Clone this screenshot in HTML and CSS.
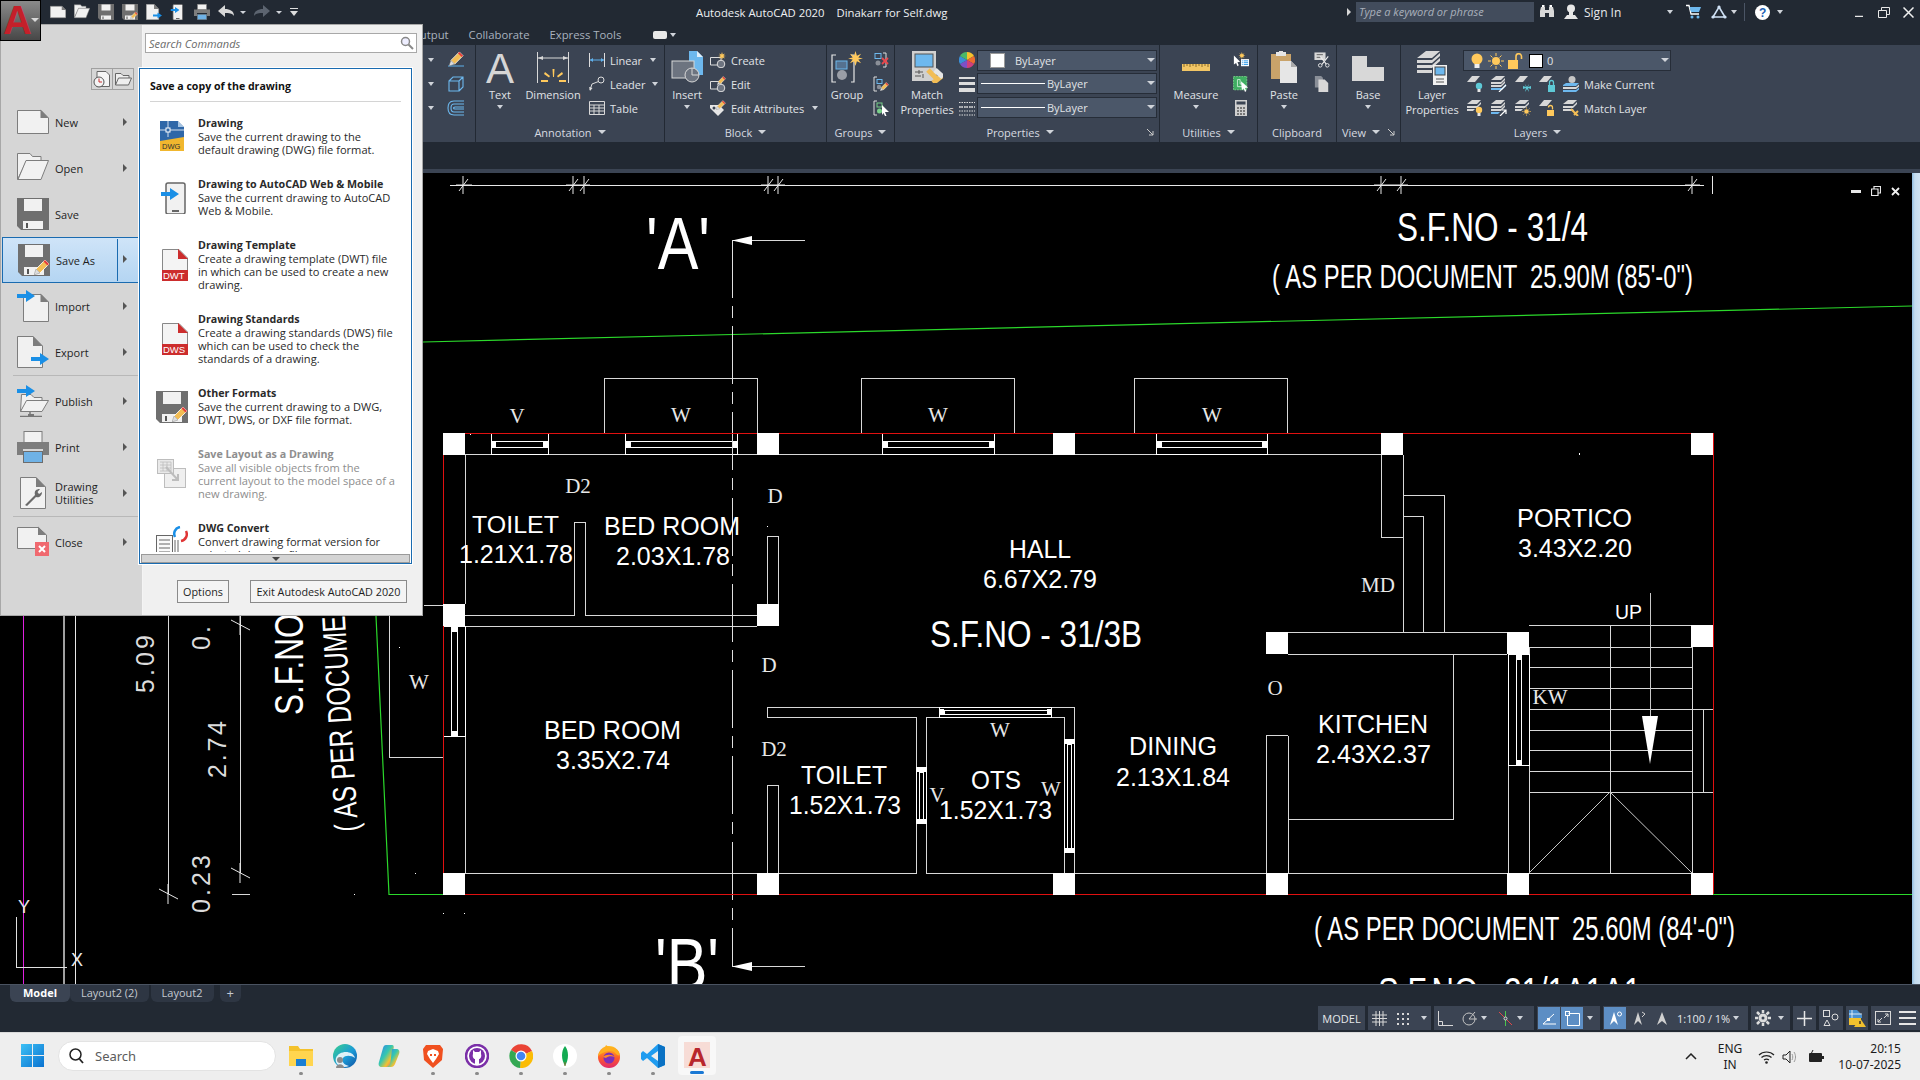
FILE: index.html
```html
<!DOCTYPE html>
<html lang="en">
<head>
<meta charset="utf-8">
<title>Autodesk AutoCAD 2020</title>
<link rel="stylesheet" href="styles.css">
</head>
<body>
<svg class="defs" width="0" height="0" aria-hidden="true">
  <defs>
    <linearGradient id="gBtn" x1="0" y1="0" x2="0" y2="1"><stop offset="0" stop-color="#8a8a8a"/><stop offset="1" stop-color="#474747"/></linearGradient>
    <linearGradient id="gWin" x1="0" y1="0" x2="1" y2="1"><stop offset="0" stop-color="#3cc0f5"/><stop offset="1" stop-color="#0a72d0"/></linearGradient>
    <linearGradient id="gEdge" x1="0" y1="0" x2="1" y2="1"><stop offset="0" stop-color="#3ad08e"/><stop offset=".55" stop-color="#1b9ad6"/><stop offset="1" stop-color="#0f4fa0"/></linearGradient>
    <linearGradient id="gCop" x1="0" y1="0" x2="1" y2="1"><stop offset="0" stop-color="#2e7ff0"/><stop offset=".45" stop-color="#35c8b0"/><stop offset=".7" stop-color="#f2c230"/><stop offset="1" stop-color="#e0489a"/></linearGradient>
    <linearGradient id="gFox" x1="0" y1="0" x2="0" y2="1"><stop offset="0" stop-color="#ffc11f"/><stop offset=".55" stop-color="#ff5a2a"/><stop offset="1" stop-color="#e0286c"/></linearGradient>

    <symbol id="m-new" viewBox="0 0 32 32"><path d="M.5 4.500H24L31.500 12V27.500H.5Z" fill="#f1f1f1" stroke="#7d7d7d"/><path d="M23.500 3.500L31.500 12H23.500Z" fill="#7d7d7d"/></symbol>
    <symbol id="m-open" viewBox="0 0 32 32"><path d="M.5 1.500H13L15.500 4.500H24V9H9.500L.5 27.500Z" fill="#f1f1f1" stroke="#7d7d7d"/><path d="M9 8.500H31.500L24 27.500H1Z" fill="#f1f1f1" stroke="#7d7d7d"/></symbol>
    <symbol id="m-save" viewBox="0 0 32 32"><path d="M0 0H32V32H4L0 28Z" fill="#6f6f6f"/><rect x="7" y="1" width="18" height="12" fill="#f1f1f1"/><rect x="6" y="23" width="20" height="8" fill="#f1f1f1"/><rect x="9" y="25" width="2" height="5" fill="#555"/></symbol>
    <symbol id="pencil" viewBox="0 0 16 16"><path d="M11 1L15 5L6 14L2 10Z" fill="#f2bd55" stroke="#fff" stroke-width=".8"/><path d="M11 1L15 5L13.500 6.500L9.500 2.500Z" fill="#e23d3d"/><path d="M2 10L6 14L0 16Z" fill="#ddd" stroke="#777" stroke-width=".4"/></symbol>
    <symbol id="m-saveas" viewBox="0 0 32 32"><use href="#m-save" width="32" height="32"/><use href="#pencil" x="16" y="15" width="16" height="16"/></symbol>
    <symbol id="arrow-b" viewBox="0 0 18 12"><path d="M0 4H9V0L18 6L9 12V8H0Z" fill="#1a8fe6"/></symbol>
    <symbol id="m-import" viewBox="0 0 32 32"><path d="M6.500 4.500H24L31.500 12V31.500H6.500Z" fill="#f1f1f1" stroke="#7d7d7d"/><path d="M23.500 3.500L31.500 12H23.500Z" fill="#7d7d7d"/><use href="#arrow-b" x="0" y="0" width="18" height="12"/></symbol>
    <symbol id="m-export" viewBox="0 0 32 32"><path d="M.5 .5H16L25.500 10V31.500H.5Z" fill="#f1f1f1" stroke="#7d7d7d"/><path d="M16 0L25.500 10H16Z" fill="#7d7d7d"/><use href="#arrow-b" x="14" y="17" width="18" height="12"/></symbol>
    <symbol id="m-publish" viewBox="0 0 32 32"><path d="M4.500 9.500H14L17 12.500H25V16H11L3.500 26.500Z" fill="#f1f1f1" stroke="#7d7d7d"/><path d="M9.500 15.500H31.500L25 26.500H3.500Z" fill="#f1f1f1" stroke="#7d7d7d"/><path d="M13 27V31M3 31.500H25" stroke="#777" stroke-width="1.500" fill="none"/><rect x="11" y="29" width="6" height="3" fill="#777"/><use href="#arrow-b" x="0" y="0" width="18" height="12"/></symbol>
    <symbol id="m-print" viewBox="0 0 32 32"><rect x="7" y=".5" width="18" height="11" fill="#f1f1f1" stroke="#7d7d7d"/><path d="M0 11H32V24H26V18H6V24H0Z" fill="#7d7d7d"/><rect x="6.500" y="20.500" width="19" height="11" fill="#6fb2e6" stroke="#6d6d6d"/></symbol>
    <symbol id="m-util" viewBox="0 0 32 32"><path d="M3.500 .5H19L28.500 10V31.500H3.500Z" fill="#f1f1f1" stroke="#7d7d7d"/><path d="M19 0L28.500 10H19Z" fill="#7d7d7d"/><path d="M8 28L18 18C17 14 19 12 23 12L20.500 15L22 17L25 15C25 19 22 21 19 20L10 29Z" fill="#6a6a6a"/></symbol>
    <symbol id="m-close" viewBox="0 0 32 32"><path d="M.5 1.500H21L29.500 9V22H18V22.500H.5Z" fill="#f1f1f1" stroke="#7d7d7d"/><path d="M21 .5L29.500 9H21Z" fill="#7d7d7d"/><rect x="18" y="16" width="14" height="14" fill="#f0696f"/><path d="M22 20L28 26M28 20L22 26" stroke="#fff" stroke-width="2"/></symbol>
    <symbol id="p-dwg" viewBox="0 0 32 32"><path d="M0 0H24V30H0Z" fill="#2f67a8"/><path d="M18 0L24 6H18Z" fill="#a6c4e2"/><path d="M18 0H24V6Z" fill="#fff"/><path d="M0 17H24V30H0Z" fill="#2f67a8"/><path d="M0 20L24 16V30H0Z" fill="#f1b72e"/><path d="M0 9H24M8 0V16" stroke="#fff" stroke-width=".8"/><rect x="6" y="7" width="4" height="4" fill="#2f67a8" stroke="#fff"/><text class="ico-t" x="2" y="28" font-size="7.500" fill="#333">DWG</text></symbol>
    <symbol id="p-mobile" viewBox="0 0 32 32"><rect x="6" y="1" width="19" height="31" rx="2" fill="#f1f1f1" stroke="#666" stroke-width="1.500"/><rect x="12" y="28" width="7" height="2" fill="#666"/><use href="#arrow-b" x="1" y="6" width="18" height="12"/></symbol>
    <symbol id="p-dwt" viewBox="0 0 32 32"><path d="M2.500 .5H19L27.500 9V31.500H2.500Z" fill="#f4f4f4" stroke="#888"/><path d="M18 0L28 10H18Z" fill="#cc2d2d"/><rect x="2" y="21" width="26" height="11" fill="#cc2d2d"/><text class="ico-t" x="3" y="30" font-size="9.500" fill="#fff">DWT</text></symbol>
    <symbol id="p-dws" viewBox="0 0 32 32"><path d="M2.500 .5H19L27.500 9V31.500H2.500Z" fill="#f4f4f4" stroke="#888"/><path d="M18 0L28 10H18Z" fill="#cc2d2d"/><rect x="2" y="21" width="26" height="11" fill="#cc2d2d"/><text class="ico-t" x="3" y="30" font-size="9.500" fill="#fff">DWS</text></symbol>
    <symbol id="p-layout" viewBox="0 0 32 32"><rect x="8.500" y="10.500" width="21" height="19" fill="#efefef" stroke="#bdbdbd"/><rect x="1.500" y="1.500" width="16" height="14" fill="#e9e9e9" stroke="#bdbdbd"/><path d="M4 4H15V13H4M7 4V13M11 4V13M4 7H15M4 10H15" stroke="#bdbdbd" fill="none" stroke-width=".8"/><path d="M10 9L22 22M22 16V22H16" stroke="#bdbdbd" stroke-width="2" fill="none"/></symbol>
    <symbol id="p-conv" viewBox="0 0 32 32"><rect x=".5" y="9.500" width="16" height="22" fill="#fafafa" stroke="#666"/><path d="M3 14H14M3 18H14M3 22H14M3 26H14M19 14V32M22 14V32" stroke="#666" fill="none"/><path d="M24 1C19 2 17 7 19 11" stroke="#1a8fe6" stroke-width="2.500" fill="none"/><path d="M25 15C30 14 32 9 30 5" stroke="#e03535" stroke-width="2.500" fill="none"/></symbol>
    <symbol id="s-eraser" viewBox="0 0 18 18"><path d="M1 15H17" stroke="#5fb0ec"/><use href="#pencil" x="2" y="0" width="15" height="15"/></symbol>
    <symbol id="s-box" viewBox="0 0 18 18"><path d="M2 6H12V16H2ZM2 6L6 2H16V12L12 16M12 6L16 2" fill="none" stroke="#6db8ee" stroke-width="1.100"/></symbol>
    <symbol id="s-off" viewBox="0 0 18 18"><path d="M17 2H7C2 2 1 5.500 1 9S2 16 7 16H17M17 5H7C5 5 4 7 4 9S5 13 7 13H17M17 8H8C6 8 6 10 8 10H17" fill="none" stroke="#6db8ee" stroke-width="1.100"/></symbol>
    <symbol id="s-linear" viewBox="0 0 16 16"><path d="M.5 1V15M15.500 1V15" stroke="#ddd"/><path d="M1 8H15" stroke="#5fb0ec"/><path d="M1 8L4 6V10ZM15 8L12 6V10Z" fill="#5fb0ec"/></symbol>
    <symbol id="s-leader" viewBox="0 0 16 16"><circle cx="12" cy="4" r="3" fill="none" stroke="#ddd"/><path d="M9.500 5.500L3 8L1 14" fill="none" stroke="#ddd"/><path d="M1 15L0 11L3.500 12Z" fill="#ddd"/></symbol>
    <symbol id="s-table" viewBox="0 0 16 16"><path d="M.5 1.500H15.500V14.500H.5ZM.5 5H15.500M.5 8H15.500M.5 11H15.500M5 5V14.500M10 5V14.500" fill="none" stroke="#d9d9d9"/></symbol>
    <symbol id="s-star" viewBox="0 0 16 16"><path d="M8 0L9.500 5L14 3L11 7L16 8L11 9L14 13L9.500 11L8 16L6.500 11L2 13L5 9L0 8L5 7L2 3L6.500 5Z" fill="#ffc95c"/></symbol>
    <symbol id="s-create" viewBox="0 0 16 16"><path d="M.5 5.500H11V13H.5Z" fill="none" stroke="#ddd"/><circle cx="11" cy="12" r="3.800" fill="#6d7480" stroke="#ddd"/><use href="#s-star" x="8" y="0" width="8" height="8"/></symbol>
    <symbol id="s-edit" viewBox="0 0 16 16"><path d="M.5 5.500H11V13H.5Z" fill="none" stroke="#ddd"/><circle cx="11" cy="12" r="3.800" fill="#6d7480" stroke="#ddd"/><use href="#pencil" x="7" y="0" width="9" height="9"/></symbol>
    <symbol id="s-attr" viewBox="0 0 16 16"><path d="M0 5H9L14 10L8 16L0 8Z" fill="#e6e6e6"/><circle cx="4" cy="8" r="1.500" fill="#3b4453"/><use href="#pencil" x="6" y="0" width="10" height="10"/></symbol>
    <symbol id="s-ung" viewBox="0 0 16 16"><rect x="2" y="1.500" width="6" height="5" fill="none" stroke="#6db8ee"/><circle cx="5" cy="11" r="2.500" fill="#8a8f98"/><path d="M10 1H13V15H10" fill="none" stroke="#ddd"/><path d="M9 6L15 12M15 6L9 12" stroke="#e8484d" stroke-width="1.800"/></symbol>
    <symbol id="s-gedit" viewBox="0 0 16 16"><path d="M4 1H1V15H4" fill="none" stroke="#ddd"/><rect x="4" y="3.500" width="5" height="4" fill="none" stroke="#6db8ee"/><circle cx="6" cy="11" r="2.200" fill="#8a8f98"/><use href="#pencil" x="7" y="6" width="9" height="9"/></symbol>
    <symbol id="s-gsel" viewBox="0 0 16 16"><path d="M4 1H1V15H4" fill="none" stroke="#ddd"/><rect x="4" y="3" width="5" height="4" fill="none" stroke="#79d08a"/><circle cx="6.500" cy="11" r="2.500" fill="#79d08a"/><path d="M9 5L16 12H12L13.500 16L12 16L10.500 13L9 15Z" fill="#fff"/></symbol>
    <symbol id="s-color" viewBox="0 0 16 16"><path d="M8 8V0A8 8 0 0 1 15 4Z" fill="#f6c12c"/><path d="M8 8L15 4A8 8 0 0 1 15 12Z" fill="#ed6c2e"/><path d="M8 8L15 12A8 8 0 0 1 8 16Z" fill="#d03f7c"/><path d="M8 8V16A8 8 0 0 1 1 12Z" fill="#7d50c6"/><path d="M8 8L1 12A8 8 0 0 1 1 4Z" fill="#3a8fd8"/><path d="M8 8L1 4A8 8 0 0 1 8 0Z" fill="#4bb868"/></symbol>
    <symbol id="s-lw" viewBox="0 0 16 16"><rect y="1" width="16" height="2" fill="#ddd"/><rect y="6" width="16" height="3" fill="#ddd"/><rect y="12" width="16" height="4" fill="#ddd"/></symbol>
    <symbol id="s-lt" viewBox="0 0 16 16"><path d="M0 2.500H16M0 7H16M0 11H16M0 15H16" stroke="#ddd" stroke-dasharray="1.500 1" fill="none"/><path d="M0 7H16" stroke="#ddd" stroke-dasharray="4 1" fill="none"/></symbol>
    <symbol id="s-qp" viewBox="0 0 18 18"><path d="M1 4L8 11L5 11.500L6.500 15L5 16L3.500 12.500L1 14Z" fill="#fff"/><use href="#s-star" x="6" y="0" width="8" height="8"/><rect x="9" y="8" width="9" height="8" fill="#fff"/><path d="M10 10H11M12 10H17M10 12H11M12 12H17M10 14H11M12 14H17" stroke="#1a8fe6"/></symbol>
    <symbol id="s-qs" viewBox="0 0 18 18"><rect x=".5" y=".5" width="15" height="15" fill="#3fae62" stroke="#79d08a" stroke-dasharray="2 1"/><path d="M5 4H8V9H12V12H5Z" fill="none" stroke="#cdeed6"/><path d="M9 6L17 13L13.500 13.500L15 17L13.500 18L12 14L10 16Z" fill="#fff"/></symbol>
    <symbol id="s-calc" viewBox="0 0 16 16"><rect x="2" width="12" height="16" fill="#d0d0d0"/><rect x="3.500" y="1.500" width="9" height="3" fill="#3b4453"/><path d="M4 7H6V9H4ZM7 7H9V9H7ZM10 7H12V9H10ZM4 10H6V12H4ZM7 10H9V12H7ZM10 10H12V12H10ZM4 13H6V15H4ZM7 13H9V15H7ZM10 13H12V15H10Z" fill="#777"/></symbol>
    <symbol id="s-cut" viewBox="0 0 18 18"><path d="M.5 .5H13V9H.5Z" fill="#d8d8d8"/><path d="M3 3H10M3 6H8" stroke="#555"/><path d="M7 5L14 14M16 5L9 14" stroke="#eee" stroke-width="1.200"/><circle cx="7" cy="15" r="2" fill="#3b4453" stroke="#eee"/><circle cx="15" cy="15" r="2" fill="#3b4453" stroke="#eee"/></symbol>
    <symbol id="s-copy" viewBox="0 0 18 18"><path d="M1 0H8L10 2V13H1Z" fill="#8a8f98"/><path d="M5 4H12L16 8V18H5Z" fill="#d8d8d8"/></symbol>
    <symbol id="l-a" viewBox="0 0 16 16"><path d="M5 0H13L8 6H0Z" fill="#d8d8d8"/><circle cx="12" cy="10" r="3.200" fill="#5ec9d6"/><rect x="10.500" y="13" width="3" height="3" fill="#e6e6e6"/></symbol>
    <symbol id="l-b" viewBox="0 0 16 16"><path d="M5 0H14L10 4H0ZM0 6H10L14 2V4L10 8H0ZM0 9H10L14 5V7L10 11H0Z" fill="#d8d8d8"/><path d="M0 12H11L15 8V10L11 14H0Z" fill="#6db8ee"/><path d="M8 16L15 9" stroke="#fff" stroke-width="1.200"/></symbol>
    <symbol id="l-c" viewBox="0 0 16 16"><path d="M5 0H13L8 6H0Z" fill="#d8d8d8"/><path d="M10 8L11 11L8 10L8 13L11 12L10 16L12 13L14 16L13 12L16 13L16 10L13 11L14 8L12 11Z" fill="#5ec9d6"/></symbol>
    <symbol id="l-d" viewBox="0 0 16 16"><path d="M5 0H13L8 6H0Z" fill="#d8d8d8"/><rect x="9" y="9" width="7" height="7" fill="#5ec9d6"/><path d="M10.500 9V6.500A2 2 0 0 1 14.500 6.500V9" stroke="#5ec9d6" fill="none" stroke-width="1.300"/></symbol>
    <symbol id="l-cur" viewBox="0 0 16 16"><circle cx="9" cy="3.500" r="3.500" fill="#c6c6c6"/><path d="M0 9L3 7H16L13 10H0Z" fill="#6db8ee"/><path d="M0 11H13L16 8.500V10.500L13 13H0Z" fill="#d8d8d8"/><path d="M0 14H13L16 11.500V13.500L13 16H0Z" fill="#6db8ee"/></symbol>
    <symbol id="l-e" viewBox="0 0 16 16"><path d="M5 0H14L10 4H0ZM0 6H10L14 2V4L10 8H0ZM0 9H8L6 11H0Z" fill="#d8d8d8"/><circle cx="12" cy="10" r="3.200" fill="#ffc95c"/><rect x="10.500" y="13" width="3" height="3" fill="#e6e6e6"/></symbol>
    <symbol id="l-f" viewBox="0 0 16 16"><path d="M5 0H14L10 4H0ZM0 6H10L14 2V4L10 8H0ZM0 9H10L14 5V7L10 11H0Z" fill="#d8d8d8"/><path d="M0 12H9L7 14H0Z" fill="#6db8ee"/><path d="M9 16L15 10M11 10H15V14" stroke="#fff" stroke-width="1.200" fill="none"/></symbol>
    <symbol id="l-g" viewBox="0 0 16 16"><path d="M5 0H14L10 4H0ZM0 6H10L14 2V4L10 8H0ZM0 9H8L6 11H0Z" fill="#d8d8d8"/><use href="#s-sun" x="7" y="7" width="9" height="9"/></symbol>
    <symbol id="l-h" viewBox="0 0 16 16"><path d="M5 0H13L8 6H0Z" fill="#d8d8d8"/><rect x="8" y="10" width="7" height="6" fill="#ffc95c"/><path d="M13.500 9.500V7.500A2 2 0 0 0 9.500 7.500" stroke="#ffc95c" fill="none" stroke-width="1.300"/></symbol>
    <symbol id="l-i" viewBox="0 0 16 16"><path d="M5 0H14L10 4H0ZM0 6H10L14 2V4L10 8H0ZM0 9H10L11 11H0Z" fill="#d8d8d8"/><path d="M8 9L15 16M15 11L11 15" stroke="#f2bd55" stroke-width="2"/></symbol>
    <symbol id="s-sun" viewBox="0 0 16 16"><circle cx="8" cy="8" r="4" fill="#ffc95c"/><path d="M8 0V3M8 13V16M0 8H3M13 8H16M2.500 2.500L4.500 4.500M11.500 11.500L13.500 13.500M2.500 13.500L4.500 11.500M11.500 4.500L13.500 2.500" stroke="#ffc95c"/></symbol>
    <symbol id="s-bulb" viewBox="0 0 16 16"><circle cx="8" cy="6" r="5.500" fill="#ffc95c"/><path d="M5.500 11H10.500V15H5.500Z" fill="#eee"/></symbol>
    <symbol id="s-lock" viewBox="0 0 16 16"><rect x="1" y="7" width="10" height="9" fill="#ffc95c"/><path d="M9 7V3.500A2.600 2.600 0 0 1 14.500 3.500V6" stroke="#ffc95c" fill="none" stroke-width="1.600"/></symbol>
    <symbol id="b-lens" viewBox="0 0 16 16"><path d="M2 3H6V13H1V7ZM10 3H14L15 7V13H10Z" fill="#d8d8d8"/><rect x="6" y="6" width="4" height="3" fill="#d8d8d8"/><rect x="3" y="1" width="2.500" height="2" fill="#fff"/><rect x="10.500" y="1" width="2.500" height="2" fill="#fff"/></symbol>
    <symbol id="b-user" viewBox="0 0 16 16"><circle cx="8" cy="4.500" r="4" fill="#e6e6e6"/><rect x="6" y="8" width="4" height="3" fill="#e6e6e6"/><path d="M1 15L4 11H12L15 15Z" fill="#e6e6e6"/></symbol>
    <symbol id="b-cart" viewBox="0 0 16 16"><path d="M0 1.500H3L5 10H13" stroke="#fff" stroke-width="1.300" fill="none"/><path d="M3.500 3H15L13 8H5Z" fill="#6db8ee"/><circle cx="6" cy="13" r="1.500" fill="#6db8ee"/><circle cx="12" cy="13" r="1.500" fill="#6db8ee"/></symbol>
    <symbol id="b-tri" viewBox="0 0 16 16"><path d="M8 3L14 13H2Z" fill="none" stroke="#cfe1f5" stroke-width="1.600"/><circle cx="8" cy="3" r="1.600" fill="#cfe1f5"/><circle cx="2" cy="13" r="1.600" fill="#cfe1f5"/><circle cx="14" cy="13" r="1.600" fill="#cfe1f5"/></symbol>
  </defs>
</svg>

<div class="app">
  <header class="titlebar">
    <div class="qat">
      <svg class="i16"><use href="#m-new"/></svg>
      <svg class="i16"><use href="#m-open"/></svg>
      <svg class="i16"><use href="#m-save"/></svg>
      <svg class="i16"><use href="#m-saveas"/></svg>
      <svg class="i16"><use href="#m-export"/></svg>
      <svg class="i16"><use href="#p-mobile"/></svg>
      <svg class="i16"><use href="#m-print"/></svg>
      <svg class="i16 q-undo" viewBox="0 0 16 16"><path d="M0 7L7 1V5C12 5 16 7 16 12C14 9 11 9 7 9V13Z" fill="#d8d8d8"/></svg>
      <span class="car q-car"></span>
      <svg class="i16 q-redo" viewBox="0 0 16 16"><path d="M16 7L9 1V5C4 5 0 7 0 12C2 9 5 9 9 9V13Z" fill="#5c6470"/></svg>
      <span class="car q-car"></span>
      <svg class="q-menu" width="8" height="8" viewBox="0 0 8 8"><path d="M0 .5H8" stroke="#ddd"/><path d="M0 3H8L4 8Z" fill="#ddd"/></svg>
    </div>
    <div class="title"><span>Autodesk AutoCAD 2020</span><span class="title-file">Dinakarr for Self.dwg</span></div>
    <span class="tri-r"></span>
    <div class="search-key">Type a keyword or phrase</div>
    <svg class="i16 t-lens"><use href="#b-lens"/></svg>
    <svg class="i16 t-user"><use href="#b-user"/></svg>
    <span class="signin">Sign In</span>
    <span class="car t-car1"></span>
    <svg class="i16 t-cart"><use href="#b-cart"/></svg>
    <svg class="i16 t-tri"><use href="#b-tri"/></svg>
    <span class="car t-car2"></span>
    <span class="t-sep"></span>
    <svg class="t-help" width="15" height="15" viewBox="0 0 15 15"><circle cx="7.500" cy="7.500" r="7.500" fill="#fff"/><text class="ico-b" x="4" y="12" font-size="12" fill="#1a5fb4">?</text></svg>
    <span class="car t-car3"></span>
    <div class="winctl">
      <svg width="10" height="10" viewBox="0 0 10 10"><path d="M0 9.500H8" stroke="#e8e8e8" stroke-width="1.500"/></svg>
      <svg width="12" height="11" viewBox="0 0 12 11"><path d="M.5 3.500H8.500V10.500H.5ZM3.500 3V.5H11.500V7.500H9" fill="none" stroke="#e8e8e8"/></svg>
      <svg width="11" height="11" viewBox="0 0 11 11"><path d="M.5 .5L10.500 10.500M10.500 .5L.5 10.500" stroke="#f0f0f0" stroke-width="1.500"/></svg>
    </div>
  </header>

  <nav class="tabs">
    <span class="tab">Output</span>
    <span class="tab">Collaborate</span>
    <span class="tab">Express Tools</span>
    <span class="tab-toggle"></span>
    <span class="car tab-car"></span>
  </nav>

  <div class="ribbon">
    <section class="panel p0">
      <div class="tools t-right">
        <div class="scol">
          <div class="srow"><span class="car m-car"></span><svg class="i16 w18"><use href="#s-eraser"/></svg></div>
          <div class="srow"><span class="car m-car"></span><svg class="i16 w18"><use href="#s-box"/></svg></div>
          <div class="srow"><span class="car m-car"></span><svg class="i16 w18"><use href="#s-off"/></svg></div>
        </div>
      </div>
      <div class="plabel"></div>
    </section>

    <section class="panel p1">
      <div class="tools">
        <div class="big b-text">
          <div class="bicon"><span class="big-a">A</span></div>
          <span>Text</span><span class="car c-down"></span>
        </div>
        <div class="big b-dim">
          <div class="bicon"><svg width="32" height="32" viewBox="0 0 32 32"><path d="M.5 1V32M31.500 1V32" stroke="#d8d8d8"/><path d="M1 7H31" stroke="#d8d8d8"/><path d="M1 7L6 5V9ZM31 7L26 5V9Z" fill="#d8d8d8"/><path d="M15.500 18H17.500L17 26H16ZM7 23L8 21L13 25L12 26.500ZM26 23L25 21L20 25L21 26.500ZM4 29H11V31H4ZM22 29H29V31H22Z" fill="#ffc95c"/></svg></div>
          <span>Dimension</span>
        </div>
        <div class="scol s-anno">
          <div class="srow"><svg class="i16"><use href="#s-linear"/></svg><span>Linear</span><span class="car r-car1"></span></div>
          <div class="srow"><svg class="i16"><use href="#s-leader"/></svg><span>Leader</span><span class="car r-car2"></span></div>
          <div class="srow"><svg class="i16"><use href="#s-table"/></svg><span>Table</span></div>
        </div>
      </div>
      <div class="plabel"><span>Annotation</span><span class="car"></span></div>
    </section>

    <section class="panel p2">
      <div class="tools">
        <div class="big b-ins">
          <div class="bicon"><svg width="32" height="32" viewBox="0 0 32 32"><path d="M18 0H26L32 6V24H18Z" fill="#6db8ee"/><path d="M26 0L32 6H26Z" fill="#dfeefa"/><rect x="1" y="10" width="22" height="17" fill="#6d7480" stroke="#d8d8d8"/><circle cx="21" cy="24" r="7" fill="#6d7480" stroke="#d8d8d8"/><path d="M21 24V17M21 24H28" stroke="#d8d8d8"/></svg></div>
          <span>Insert</span><span class="car c-down"></span>
        </div>
        <div class="scol s-block">
          <div class="srow"><svg class="i16"><use href="#s-create"/></svg><span>Create</span></div>
          <div class="srow"><svg class="i16"><use href="#s-edit"/></svg><span>Edit</span></div>
          <div class="srow"><svg class="i16"><use href="#s-attr"/></svg><span>Edit Attributes</span><span class="car r-car3"></span></div>
        </div>
      </div>
      <div class="plabel"><span>Block</span><span class="car"></span></div>
    </section>

    <section class="panel p3">
      <div class="tools">
        <div class="big b-grp">
          <div class="bicon"><svg width="32" height="32" viewBox="0 0 32 32"><path d="M5 4H1V31H5M20 4H23V31H20" fill="none" stroke="#e6e6e6" stroke-width="1.200"/><rect x="5" y="10" width="11" height="8" fill="#55718f" stroke="#6db8ee"/><circle cx="11" cy="24" r="5" fill="#9a9ea6"/><use href="#s-star" x="17" y="0" width="15" height="15"/></svg></div>
          <span>Group</span>
        </div>
        <div class="scol s-grp">
          <div class="srow"><svg class="i16"><use href="#s-ung"/></svg></div>
          <div class="srow"><svg class="i16"><use href="#s-gedit"/></svg></div>
          <div class="srow"><svg class="i16"><use href="#s-gsel"/></svg></div>
        </div>
      </div>
      <div class="plabel"><span>Groups</span><span class="car"></span></div>
    </section>

    <section class="panel p4">
      <div class="tools">
        <div class="big b-match">
          <div class="bicon"><svg width="32" height="32" viewBox="0 0 32 32"><path d="M1 0H25V30H1Z" fill="#d0d0d0"/><rect x="4" y="3" width="18" height="13" fill="#6db8ee" stroke="#555"/><path d="M4 21H12M4 25H10M8 19V23M12 23V27" stroke="#555"/><path d="M17 19L28 30M32 24L22 32" stroke="#f2bd55" stroke-width="5"/><path d="M24 19L32 26" stroke="#e6e6e6" stroke-width="5"/></svg></div>
          <span>Match</span><span>Properties</span>
        </div>
        <div class="scol s-prop">
          <div class="srow"><svg class="i16"><use href="#s-color"/></svg></div>
          <div class="srow"><svg class="i16"><use href="#s-lw"/></svg></div>
          <div class="srow"><svg class="i16"><use href="#s-lt"/></svg></div>
        </div>
        <div class="scol s-drop">
          <div class="drop d-color"><span class="swatch"></span><span>ByLayer</span></div>
          <div class="drop"><span class="ln"></span><span>ByLayer</span></div>
          <div class="drop"><span class="ln"></span><span>ByLayer</span></div>
        </div>
      </div>
      <div class="plabel has-launch"><span>Properties</span><span class="car"></span><svg class="launch" width="7" height="7" viewBox="0 0 7 7"><path d="M0 0L6 6M6 2V6H2" stroke="#ccc" fill="none"/></svg></div>
    </section>

    <section class="panel p5">
      <div class="tools">
        <div class="big b-meas">
          <div class="bicon ruler-box"><svg width="28" height="7" viewBox="0 0 28 7"><rect width="28" height="7" fill="#f2c665"/><path d="M2 0V3M5 0V2M8 0V3M11 0V2M14 0V3M17 0V2M20 0V3M23 0V2M26 0V3" stroke="#8a6a28"/></svg></div>
          <span>Measure</span><span class="car c-down"></span>
        </div>
        <div class="scol s-util">
          <div class="srow"><svg class="i16"><use href="#s-qp"/></svg></div>
          <div class="srow"><svg class="i16"><use href="#s-qs"/></svg></div>
          <div class="srow"><svg class="i16"><use href="#s-calc"/></svg></div>
        </div>
      </div>
      <div class="plabel"><span>Utilities</span><span class="car"></span></div>
    </section>

    <section class="panel p6">
      <div class="tools">
        <div class="big b-paste">
          <div class="bicon"><svg width="26" height="32" viewBox="0 0 26 32"><path d="M0 3H20V28H0Z" fill="#c9a36a"/><rect x="5" y="1" width="10" height="4" fill="#e6e6e6"/><rect x="8" y="0" width="4" height="2" fill="#e6e6e6"/><path d="M9 10H20L26 16V32H9Z" fill="#e6e6e6"/><path d="M20 10L26 16H20Z" fill="#aaa"/></svg></div>
          <span>Paste</span><span class="car c-down"></span>
        </div>
        <div class="scol s-clip">
          <div class="srow"><svg class="i16"><use href="#s-cut"/></svg></div>
          <div class="srow"><svg class="i16"><use href="#s-copy"/></svg></div>
          <div class="srow"></div>
        </div>
      </div>
      <div class="plabel"><span>Clipboard</span></div>
    </section>

    <section class="panel p7">
      <div class="tools">
        <div class="big b-base">
          <div class="bicon"><svg width="32" height="25" viewBox="0 0 32 25"><path d="M0 0H15V11H32V25H0Z" fill="#d8d8d8"/></svg></div>
          <span>Base</span><span class="car c-down"></span>
        </div>
      </div>
      <div class="plabel has-launch lv"><span>View</span><span class="car"></span><svg class="launch" width="7" height="7" viewBox="0 0 7 7"><path d="M0 0L6 6M6 2V6H2" stroke="#ccc" fill="none"/></svg></div>
    </section>

    <section class="panel p8">
      <div class="tools">
        <div class="big b-layer">
          <div class="bicon"><svg width="30" height="34" viewBox="0 0 30 34"><path d="M9 0H23L15 7H0ZM0 9H15L23 2V5L15 12H0ZM0 14H15L23 7V10L15 17H0ZM0 19H15V22H0Z" fill="#d8d8d8"/><rect x="16" y="14" width="14" height="20" fill="#f2f2f2"/><rect x="18" y="16" width="10" height="8" fill="#6db8ee" stroke="#444"/><path d="M19 28H27M19 31H27" stroke="#555"/></svg></div>
          <span>Layer</span><span>Properties</span>
        </div>
        <div class="scol s-layer">
          <div class="drop d-layer"><svg class="i16"><use href="#s-bulb"/></svg><svg class="i16"><use href="#s-sun"/></svg><svg class="i16"><use href="#s-lock"/></svg><span class="swatch sw-b"></span><span>0</span></div>
          <div class="srow lrow"><svg class="i16"><use href="#l-a"/></svg><svg class="i16"><use href="#l-b"/></svg><svg class="i16"><use href="#l-c"/></svg><svg class="i16"><use href="#l-d"/></svg><svg class="i16"><use href="#l-cur"/></svg><span class="lt">Make Current</span></div>
          <div class="srow lrow"><svg class="i16"><use href="#l-e"/></svg><svg class="i16"><use href="#l-f"/></svg><svg class="i16"><use href="#l-g"/></svg><svg class="i16"><use href="#l-h"/></svg><svg class="i16"><use href="#l-i"/></svg><span class="lt">Match Layer</span></div>
        </div>
      </div>
      <div class="plabel la"><span>Layers</span><span class="car"></span></div>
    </section>
  </div>

  <div class="ribbon-gap"></div>
  <div class="ribbon-band"></div>

  <main class="canvas">
    <svg class="drawing" width="1912" height="811" viewBox="0 173 1912 811">
      <g fill="none" shape-rendering="crispEdges">
        <path d="M23.500 600V984" stroke="#e020e0"/>
        <path d="M64 600V984" stroke="#a0a0a0" stroke-width="2"/>
        <path d="M75.500 600V984" stroke="#e8e8e8"/>
        <path d="M16.500 917V967.500H67" stroke="#e0e0e0"/>
        <path d="M168.500 600V894M240.500 600V873M232 894.500H250" stroke="#d8d8d8"/>
      </g>
      <g fill="none" stroke="#e8e8e8">
        <path d="M159 889L178 899M168 884V904M231 620L250 630M240 615V635M231 868L250 878M240 863V883"/>
        <path d="M450 185.500H1704" shape-rendering="crispEdges"/>
        <path d="M456 185H472M463 176V194M459 191L468 179M566 185H590M573 176V194M584 176V194M569 191L578 179M580 191L589 179M761 185H785M768 176V194M778 176V194M764 191L773 179M774 191L783 179M1374 185H1408M1381 176V194M1401 176V194M1377 191L1386 179M1397 191L1406 179M1685 185H1700M1692 176V194M1688 191L1697 179M1712.500 176V194"/>
      </g>

      <g fill="none" stroke="#2bd92b" stroke-width="1.200">
        <path d="M423 342L1912 306"/>
        <path d="M376 616L389 894.500H443M1713 894.500H1912"/>
      </g>

      <g class="wall" fill="none" stroke="#d8d8d8" shape-rendering="crispEdges">
        <path d="M604.500 433V378.500H757.500V433M861.500 433V378.500H1014.500V433M1134.500 433V378.500H1287.500V433"/>
        <path d="M424 605.500H443M389.500 605V757.500H443"/>
        <path d="M443 454.500H1381M465.500 454V604M465.500 626V873"/>
        <path d="M465 615.500H574.500V522.500H585.500V615.500H757M465 626.500H757"/>
        <path d="M767.500 604V536.500H778.500V604"/>
        <path d="M1381.500 454V537.500H1403.500M1403.500 455V632M1403 495.500H1444.500V632M1403 516.500H1423.500V632"/>
        <path d="M1288 632.500H1507M1288 654.500H1507M1453.500 654V819.500H1288"/>
        <path d="M1288.500 735.500V873M1266.500 873V735.500H1288"/>
        <path d="M465 873.500H916.500V717.500H767.500V707.500H1074.500V873M926.500 873V717.500H1064.500V873M926 873.500H1266M1288 873.500H1507M1529 873.500H1691"/>
        <path d="M767.500 785.500H778.500V873M767.500 785V873"/>
        <path d="M1508.500 654V873M1529.500 647V873"/>
        <path d="M1529 625.500H1691M1529 647.500H1692M1529 667.500H1692M1529 688.500H1692M1529 709.500H1713M1529 730.500H1692M1529 750.500H1692M1529 771.500H1692M1529 792.500H1713"/>
        <path d="M1610.500 626V873M1692.500 647V873M1703.500 709V792"/>
      </g>
      <path d="M1610 792L1529 873M1610 792L1692 873" fill="none" stroke="#c8c8c8"/>
      <path d="M1650.500 593V716" stroke="#c8c8c8" fill="none"/>
      <path d="M1642 716H1658L1650 764Z" fill="#fff"/>

      <g class="win" fill="#000" stroke="#fff" shape-rendering="crispEdges">
        <path d="M491.500 433.500H548.500V454.500H491.500Z"/>
        <path d="M625.500 433.500H737.500V454.500H625.500Z"/>
        <path d="M882.500 433.500H994.500V454.500H882.500Z"/>
        <path d="M1156.500 433.500H1267.500V454.500H1156.500Z"/>
        <path d="M495 441.500H545V447.500H495ZM630 441.500H733V447.500H630ZM887 441.500H990V447.500H887ZM1161 441.500H1263V447.500H1161Z"/>
        <path d="M443.500 626.500H465.500V736.500H443.500Z"/>
        <path d="M451.500 631V733H457.500V631Z"/>
        <path d="M916.500 767.500H926.500V823.500H916.500Z"/>
        <path d="M919.500 772V819H923.500V772Z"/>
        <path d="M939.500 707.500H1051.500V717.500H939.500Z"/>
        <path d="M944 710.500H1047V714.500H944Z"/>
        <path d="M1064.500 739.500H1074.500V852.500H1064.500Z"/>
        <path d="M1067.500 744V848H1071.500V744Z"/>
        <path d="M1508.500 654.500H1529.500V765.500H1508.500Z"/>
        <path d="M1516.500 659V761H1521.500V659Z"/>
      </g>
      <g fill="#fff">
        <path d="M491 441H496V448H491ZM543 441H548V448H543ZM625 441H630V448H625ZM732 441H737V448H732ZM882 441H887V448H882ZM989 441H994V448H989ZM1156 441H1161V448H1156ZM1262 441H1267V448H1262Z"/>
        <path d="M451 626H458V631H451ZM451 731H458V736H451ZM917 767H926V772H917ZM917 819H926V823H917ZM940 709H944V715H940ZM1047 709H1051V715H1047ZM1065 740H1074V744H1065ZM1065 848H1074V852H1065ZM1516 654H1522V659H1516ZM1516 760H1522V765H1516Z"/>
      </g>

      <path d="M732.500 240V967" stroke="#e0e0e0" stroke-dasharray="58 8 12 8" fill="none" shape-rendering="crispEdges"/>
      <path d="M732 240.500H805M732 966.500H805" stroke="#d8d8d8" fill="none" shape-rendering="crispEdges"/>
      <path d="M732 240.500L752 236V245ZM732 966.500L752 962V971Z" fill="#fff"/>

      <path d="M443.500 433V894M443 433.500H1713.500V894M443 894.500H1713" fill="none" stroke="#e01010" shape-rendering="crispEdges"/>

      <g fill="#fff">
        <path d="M443 433H465V455H443ZM757 433H779V455H757ZM1053 433H1075V455H1053ZM1381 433H1403V455H1381ZM1691 433H1713V455H1691Z"/>
        <path d="M443 604H465V626H443ZM757 604H779V626H757Z"/>
        <path d="M1266 632H1288V654H1266ZM1507 632H1529V654H1507ZM1691 625H1713V647H1691Z"/>
        <path d="M443 873H465V895H443ZM757 873H779V895H757ZM1053 873H1075V895H1053ZM1266 873H1288V895H1266ZM1507 873H1529V895H1507ZM1691 873H1713V895H1691Z"/>
        <path d="M1577 509H1578V510H1577ZM470 434H471V435H470ZM1579 453H1580V454H1579ZM1579 454H1580V455H1579ZM399 647H400V648H399ZM415 873H416V874H415ZM354 894H355V895H354ZM443 913H444V914H443ZM464 913H465V914H464ZM767 526H768V527H767Z"/>
      </g>

      <g class="rooms">
        <text class="dr" x="1397" y="241" font-size="41" textLength="191" lengthAdjust="spacingAndGlyphs">S.F.NO - 31/4</text>
        <text class="dr" x="1272" y="288" font-size="33" textLength="421" lengthAdjust="spacingAndGlyphs">( AS PER DOCUMENT  25.90M (85'-0")</text>
        <text class="dr" x="1314" y="940" font-size="33" textLength="421" lengthAdjust="spacingAndGlyphs">( AS PER DOCUMENT  25.60M (84'-0")</text>
        <text class="dr" x="1378" y="1006" font-size="41" textLength="263" lengthAdjust="spacingAndGlyphs">S.F.NO : 31/1A1A1</text>
        <text class="dr" x="646" y="269" font-size="75" textLength="64" lengthAdjust="spacingAndGlyphs">'A'</text>
        <text class="dr" x="655" y="990" font-size="75" textLength="64" lengthAdjust="spacingAndGlyphs">'B'</text>
        <text class="dr" x="930" y="647" font-size="36" textLength="212" lengthAdjust="spacingAndGlyphs">S.F.NO - 31/3B</text>

        <text class="dr" x="472" y="533" font-size="24" textLength="87" lengthAdjust="spacingAndGlyphs">TOILET</text>
        <text class="dr" x="459" y="563" font-size="25" textLength="114" lengthAdjust="spacingAndGlyphs">1.21X1.78</text>
        <text class="dr" x="604" y="535" font-size="25" textLength="136" lengthAdjust="spacingAndGlyphs">BED ROOM</text>
        <text class="dr" x="616" y="565" font-size="25" textLength="114" lengthAdjust="spacingAndGlyphs">2.03X1.78</text>
        <text class="dr" x="1009" y="558" font-size="25" textLength="62" lengthAdjust="spacingAndGlyphs">HALL</text>
        <text class="dr" x="983" y="588" font-size="25" textLength="114" lengthAdjust="spacingAndGlyphs">6.67X2.79</text>
        <text class="dr" x="544" y="739" font-size="25" textLength="137" lengthAdjust="spacingAndGlyphs">BED ROOM</text>
        <text class="dr" x="556" y="769" font-size="25" textLength="114" lengthAdjust="spacingAndGlyphs">3.35X2.74</text>
        <text class="dr" x="801" y="784" font-size="25" textLength="86" lengthAdjust="spacingAndGlyphs">TOILET</text>
        <text class="dr" x="789" y="814" font-size="25" textLength="112" lengthAdjust="spacingAndGlyphs">1.52X1.73</text>
        <text class="dr" x="971" y="789" font-size="25" textLength="50" lengthAdjust="spacingAndGlyphs">OTS</text>
        <text class="dr" x="939" y="819" font-size="25" textLength="113" lengthAdjust="spacingAndGlyphs">1.52X1.73</text>
        <text class="dr" x="1129" y="755" font-size="25" textLength="88" lengthAdjust="spacingAndGlyphs">DINING</text>
        <text class="dr" x="1116" y="786" font-size="25" textLength="114" lengthAdjust="spacingAndGlyphs">2.13X1.84</text>
        <text class="dr" x="1318" y="733" font-size="25" textLength="110" lengthAdjust="spacingAndGlyphs">KITCHEN</text>
        <text class="dr" x="1316" y="763" font-size="25" textLength="115" lengthAdjust="spacingAndGlyphs">2.43X2.37</text>
        <text class="dr" x="1517" y="527" font-size="25" textLength="115" lengthAdjust="spacingAndGlyphs">PORTICO</text>
        <text class="dr" x="1518" y="557" font-size="25" textLength="114" lengthAdjust="spacingAndGlyphs">3.43X2.20</text>
        <text class="dr" x="1615" y="619" font-size="20" textLength="27" lengthAdjust="spacingAndGlyphs">UP</text>

        <text class="sr" x="517" y="423" text-anchor="middle">V</text>
        <text class="sr" x="681" y="422" text-anchor="middle">W</text>
        <text class="sr" x="938" y="422" text-anchor="middle">W</text>
        <text class="sr" x="1212" y="422" text-anchor="middle">W</text>
        <text class="sr" x="578" y="493" text-anchor="middle">D2</text>
        <text class="sr" x="775" y="503" text-anchor="middle">D</text>
        <text class="sr" x="769" y="672" text-anchor="middle">D</text>
        <text class="sr" x="774" y="756" text-anchor="middle">D2</text>
        <text class="sr" x="937" y="802" text-anchor="middle">V</text>
        <text class="sr" x="1000" y="737" text-anchor="middle">W</text>
        <text class="sr" x="1051" y="796" text-anchor="middle">W</text>
        <text class="sr" x="419" y="689" text-anchor="middle">W</text>
        <text class="sr" x="1275" y="695" text-anchor="middle">O</text>
        <text class="sr" x="1378" y="592" text-anchor="middle">MD</text>
        <text class="sr" x="1550" y="704" text-anchor="middle">KW</text>

        <text class="dr dim" transform="translate(154 693) rotate(-90)" font-size="25" textLength="58" lengthAdjust="spacing">5.09</text>
        <text class="dr dim" transform="translate(210 650) rotate(-90)" font-size="25" textLength="24" lengthAdjust="spacing">0.</text>
        <text class="dr dim" transform="translate(226 778) rotate(-90)" font-size="25" textLength="57" lengthAdjust="spacing">2.74</text>
        <text class="dr dim" transform="translate(210 913) rotate(-90)" font-size="25" textLength="58" lengthAdjust="spacing">0.23</text>
        <text class="dr" transform="translate(303 715) rotate(-90)" font-size="41" textLength="191" lengthAdjust="spacingAndGlyphs">S.F.NO - 31/2</text>
        <text class="dr" transform="translate(358 831) rotate(-93.500)" font-size="33" textLength="288" lengthAdjust="spacingAndGlyphs">( AS PER DOCUMENT  25</text>
        <text class="thin" x="24" y="913" text-anchor="middle">Y</text>
        <text class="thin" x="77" y="966" text-anchor="middle">X</text>
      </g>
    </svg>
    <div class="vscroll"></div>
    <div class="vpctl">
      <svg width="10" height="4" viewBox="0 0 10 4"><rect width="10" height="3" y="1" fill="#e8e8e8"/></svg>
      <svg width="10" height="10" viewBox="0 0 10 10"><path d="M.5 3V9.500H7V3ZM3 2.500V.5H9.500V7H7.500" fill="none" stroke="#e8e8e8" stroke-width="1.200"/></svg>
      <svg width="9" height="9" viewBox="0 0 9 9"><path d="M1 1L8 8M8 1L1 8" stroke="#f0f0f0" stroke-width="1.800"/></svg>
    </div>
  </main>

  <div class="layouts">
    <span class="ltab active">Model</span>
    <span class="ltab">Layout2 (2)</span>
    <span class="ltab">Layout2</span>
    <span class="ltab plus">+</span>
  </div>

  <div class="status">
    <div class="sgroup sg-model"><span>MODEL</span></div>
    <div class="sgroup sg-grid">
      <svg width="15" height="15" viewBox="0 0 15 15"><path d="M0 4H15M0 7.500H15M0 11H15M4 0V15M7.500 0V15M11 0V15" stroke="#d8d8d8"/></svg>
      <svg width="13" height="13" viewBox="0 0 13 13"><path d="M1 1H3V3H1ZM6 1H8V3H6ZM11 1H13V3H11ZM1 6H3V8H1ZM6 6H8V8H6ZM11 6H13V8H11ZM1 11H3V13H1ZM6 11H8V13H6ZM11 11H13V13H11Z" fill="#d8d8d8"/></svg>
      <span class="car"></span>
    </div>
    <div class="sgroup sg-ortho">
      <svg width="15" height="15" viewBox="0 0 15 15"><path d="M.5 0V14.500H15M.5 10.500H4.500V14" fill="none" stroke="#d8d8d8"/></svg>
      <svg class="sm1" width="15" height="15" viewBox="0 0 15 15"><circle cx="7" cy="8" r="6" fill="none" stroke="#c4c4c4"/><path d="M7 8H15M7 8L13 1" stroke="#c4c4c4" fill="none"/></svg>
      <span class="car"></span>
      <svg class="sm2" width="15" height="15" viewBox="0 0 15 15"><path d="M7.500 0V15" stroke="#4cc44c"/><path d="M1 1L14 14" stroke="#e04848"/><circle cx="7.500" cy="7.500" r="1.500" fill="#3b4453" stroke="#ddd"/></svg>
      <span class="car"></span>
    </div>
    <div class="sgroup sg-lw">
      <span class="sbtn on"><svg width="14" height="14" viewBox="0 0 14 14"><path d="M1 13H14M1 13L12 3" stroke="#fff" fill="none"/><rect x="5" y="7" width="3" height="3" fill="#fff"/></svg></span>
      <span class="sbtn on"><svg width="15" height="15" viewBox="0 0 15 15"><path d="M3.500 2.500H14.500V14.500H2.500V5" fill="none" stroke="#fff"/><rect x=".5" y=".5" width="4" height="4" fill="none" stroke="#fff"/></svg></span>
      <span class="car"></span>
    </div>
    <div class="sgroup sg-scale">
      <span class="sbtn on"><svg width="14" height="15" viewBox="0 0 14 15"><path d="M6 1L10 14L6 10L2 14Z" fill="#fff"/><circle cx="11.500" cy="3" r="2" fill="none" stroke="#fff"/></svg></span>
      <svg class="sc2" width="14" height="15" viewBox="0 0 14 15"><path d="M6 1L10 14L6 10L2 14Z" fill="#d0d0d0"/><path d="M10 1L13 3L10 6" fill="none" stroke="#d0d0d0"/></svg>
      <svg class="sc3" width="12" height="15" viewBox="0 0 12 15"><path d="M6 1L11 14L6 10L1 14Z" fill="#d0d0d0"/></svg>
      <span class="scale-t">1:100 / 1%</span>
      <span class="car"></span>
    </div>
    <div class="sgroup sg-gear">
      <svg width="16" height="16" viewBox="0 0 16 16"><circle cx="8" cy="8" r="3" fill="none" stroke="#ddd" stroke-width="3"/><path d="M8 0V3M8 13V16M0 8H3M13 8H16M2 2L4.500 4.500M11.500 11.500L14 14M2 14L4.500 11.500M11.500 4.500L14 2" stroke="#ddd" stroke-width="2.500"/></svg>
      <span class="car"></span>
    </div>
    <div class="sgroup sg-plus"><svg width="15" height="15" viewBox="0 0 15 15"><path d="M7.500 0V15M0 7.500H15" stroke="#e6e6e6" stroke-width="1.500"/></svg></div>
    <div class="sgroup sg-objs"><svg width="16" height="16" viewBox="0 0 16 16"><rect x=".5" y=".5" width="6" height="6" fill="none" stroke="#ddd"/><circle cx="12" cy="7" r="3" fill="none" stroke="#ddd"/><path d="M4 10L7 15.500H1Z" fill="none" stroke="#ddd"/></svg></div>
    <div class="sgroup sg-warn"><svg width="18" height="18" viewBox="0 0 18 18"><path d="M1 1H9L14 6V9H1Z" fill="#4a90d0"/><rect x="1" y="9" width="12" height="7" fill="#f2c12e"/><path d="M4 1V9M1 5H14" stroke="#fff" stroke-width=".8"/><path d="M12 9L18 18H6Z" fill="#f2c12e"/><path d="M12 12V15" stroke="#222" stroke-width="1.300"/></svg></div>
    <div class="sgroup sg-full">
      <svg width="16" height="14" viewBox="0 0 16 14"><rect x=".5" y=".5" width="15" height="13" fill="none" stroke="#d8d8d8"/><path d="M3 11L7 7M3 8V11H6M13 3L9 7M10 3H13V6" stroke="#d8d8d8" fill="none"/></svg>
      <svg width="17" height="14" viewBox="0 0 17 14"><path d="M0 1H17M0 7H17M0 13H17" stroke="#e6e6e6" stroke-width="2"/></svg>
    </div>
  </div>

  <footer class="taskbar">
    <svg class="tb-win" width="23" height="23" viewBox="0 0 23 23"><path d="M0 0H11V11H0ZM12 0H23V11H12ZM0 12H11V23H0ZM12 12H23V23H12Z" fill="url(#gWin)"/></svg>
    <div class="tb-search">
      <svg width="15" height="16" viewBox="0 0 15 16"><circle cx="6.500" cy="6.500" r="5.500" fill="none" stroke="#222" stroke-width="1.500"/><path d="M10.500 11L14 15" stroke="#222" stroke-width="1.800"/></svg>
      <span>Search</span>
    </div>
    <div class="tb-apps">
      <span class="tb-app dot"><svg width="24" height="24" viewBox="0 0 24 24"><path d="M0 2H9L11 5H24V22H0Z" fill="#f4c22c"/><rect y="7" width="24" height="15" fill="#ffd54f"/><rect x="7" y="15" width="10" height="7" fill="#1a7fd4"/></svg></span>
      <span class="tb-app"><svg width="24" height="24" viewBox="0 0 24 24"><circle cx="12" cy="12" r="12" fill="url(#gEdge)"/><path d="M3 14C6 6 20 6 22 14C18 11 12 11 10 14C8 17 11 21 16 22C9 25 1 21 3 14Z" fill="#fff" opacity=".85"/><circle cx="7" cy="16" r="3" fill="#8a8a8a"/><path d="M3 24C3 19 11 19 11 24Z" fill="#8a8a8a"/></svg></span>
      <span class="tb-app"><svg width="24" height="24" viewBox="0 0 24 24"><path d="M9 1H15C17 1 17 3 16.500 5L14 20C13.500 23 11 23 8 23H5C2 23 1 21 2 18L6 4C6.500 2 7.500 1 9 1Z" fill="url(#gCop)"/><path d="M15 5H19C22 5 23 7 22 10L18 20C17 22 16 23 14 23H10C12 22 13 20 13.500 18Z" fill="url(#gCop)"/></svg></span>
      <span class="tb-app dot"><svg width="24" height="24" viewBox="0 0 24 24"><path d="M5 1H19L22 5L21 16L12 24L3 16L2 5Z" fill="#f0501f"/><path d="M7 7L12 5L17 7L18 10L15 15L12 19L9 15L6 10Z" fill="#fff"/><path d="M9 10H11V12H9ZM13 10H15V12H13Z" fill="#f0501f"/></svg></span>
      <span class="tb-app dot"><svg width="24" height="24" viewBox="0 0 24 24"><circle cx="12" cy="12" r="11" fill="#fff" stroke="#7b2fa8" stroke-width="2.500"/><circle cx="12" cy="12" r="8" fill="#7b2fa8"/><path d="M8 6L10 8H14L16 6V10C17 13 15 15 14 15V20H10V15C9 15 7 13 8 10Z" fill="#fff"/></svg></span>
      <span class="tb-app dot"><svg width="24" height="24" viewBox="0 0 24 24"><path d="M12 12L2 6A12 12 0 0 1 23 7Z" fill="#ea4335"/><path d="M12 12L23 7A12 12 0 0 1 11 24Z" fill="#fbbc05"/><path d="M12 12L11 24A12 12 0 0 1 2 6Z" fill="#34a853"/><circle cx="12" cy="12" r="5.500" fill="#fff"/><circle cx="12" cy="12" r="4.300" fill="#4285f4"/></svg></span>
      <span class="tb-app dot"><svg width="24" height="24" viewBox="0 0 24 24"><circle cx="12" cy="12" r="12" fill="#fff"/><path d="M12 2C16 7 16 15 12 22C8 15 8 7 12 2Z" fill="#13aa52"/><path d="M11.500 18V22H12.500V18Z" fill="#8a6a28"/></svg></span>
      <span class="tb-app dot"><svg width="24" height="24" viewBox="0 0 24 24"><circle cx="12" cy="13" r="11" fill="url(#gFox)"/><path d="M1 12C2 6 8 5 9 1C12 4 20 3 22 8C24 14 20 11 17 8C14 6 7 7 1 12Z" fill="#ffb01f"/><circle cx="12" cy="14" r="5.500" fill="#7d2fb8"/><path d="M6 13C9 10 15 10 18 13C15 12 11 12 9 14Z" fill="#ff8a2a"/></svg></span>
      <span class="tb-app dot"><svg width="24" height="24" viewBox="0 0 24 24"><path d="M17 0L24 3V21L17 24L6 14L2 17L0 15V9L2 7L6 10ZM17 7L10 12L17 17Z" fill="#1f9cf0"/><path d="M17 0L24 3V21L17 24Z" fill="#0a72c4"/></svg></span>
      <span class="tb-app active"><svg width="26" height="26" viewBox="0 0 26 26"><rect width="26" height="26" fill="#f7dcd6"/><text class="ico-b" x="4" y="24" font-size="26" fill="#b8262c">A</text></svg></span>
    </div>
    <div class="tray">
      <svg class="tr-chev" width="12" height="7" viewBox="0 0 12 7"><path d="M1 6L6 1L11 6" fill="none" stroke="#222" stroke-width="1.500"/></svg>
      <div class="tr-lang"><span>ENG</span><span>IN</span></div>
      <svg class="tr-wifi" width="17" height="14" viewBox="0 0 17 14"><path d="M1 5C5 1 12 1 16 5M3.500 7.500C6 5 11 5 13.500 7.500M6 10C7.500 9 9.500 9 11 10" fill="none" stroke="#222" stroke-width="1.200"/><circle cx="8.500" cy="12.500" r="1.300" fill="#222"/></svg>
      <svg class="tr-spk" width="15" height="14" viewBox="0 0 15 14"><path d="M1 5H4L8 1V13L4 9H1Z" fill="none" stroke="#222"/><path d="M10 4C11 6 11 8 10 10M12 2C14 5 14 9 12 12" fill="none" stroke="#999"/></svg>
      <svg class="tr-bat" width="16" height="14" viewBox="0 0 16 14"><rect x="1" y="3" width="13" height="9" rx="1" fill="#222"/><rect x="14" y="6" width="2" height="3" fill="#222"/><path d="M5 0L3 4H6L4 7" stroke="#222" fill="none"/></svg>
      <div class="tr-clock"><span>20:15</span><span>10-07-2025</span></div>
    </div>
  </footer>

  <aside class="appmenu">
    <div class="menu-left">
      <div class="recent">
        <span class="rbtn"><svg width="18" height="17" viewBox="0 0 18 17"><path d="M4 .5H13L16.500 4V15.500H4Z" fill="#f4f4f4" stroke="#666"/><circle cx="6" cy="11" r="5" fill="#f4f4f4" stroke="#555"/><path d="M6 7.500V11H9" stroke="#c33" fill="none"/></svg></span>
        <span class="rbtn"><svg width="17" height="14" viewBox="0 0 17 14"><path d="M.5 13V1.500H6L8 3.500H14V6M.5 13L3.500 6H16.500L13.500 13Z" fill="#eee" stroke="#666"/></svg></span>
      </div>
      <div class="mitem"><svg class="micon"><use href="#m-new"/></svg><span class="mtxt">New</span><span class="marr"></span></div>
      <div class="mitem"><svg class="micon"><use href="#m-open"/></svg><span class="mtxt">Open</span><span class="marr"></span></div>
      <div class="mitem"><svg class="micon"><use href="#m-save"/></svg><span class="mtxt">Save</span></div>
      <div class="mitem sel"><svg class="micon"><use href="#m-saveas"/></svg><span class="mtxt">Save As</span><span class="msplit"></span><span class="marr"></span></div>
      <div class="mitem"><svg class="micon"><use href="#m-import"/></svg><span class="mtxt">Import</span><span class="marr"></span></div>
      <div class="mitem"><svg class="micon"><use href="#m-export"/></svg><span class="mtxt">Export</span><span class="marr"></span></div>
      <div class="msep"></div>
      <div class="mitem"><svg class="micon"><use href="#m-publish"/></svg><span class="mtxt">Publish</span><span class="marr"></span></div>
      <div class="mitem"><svg class="micon"><use href="#m-print"/></svg><span class="mtxt">Print</span><span class="marr"></span></div>
      <div class="mitem"><svg class="micon"><use href="#m-util"/></svg><span class="mtxt">Drawing<br>Utilities</span><span class="marr"></span></div>
      <div class="msep"></div>
      <div class="mitem"><svg class="micon"><use href="#m-close"/></svg><span class="mtxt">Close</span><span class="marr"></span></div>
    </div>
    <div class="menu-right">
      <div class="cmdsearch"><span>Search Commands</span><svg width="14" height="14" viewBox="0 0 14 14"><circle cx="5.500" cy="5.500" r="4" fill="#eef" stroke="#888" stroke-width="1.500"/><path d="M8.500 8.500L13 13" stroke="#888" stroke-width="2"/></svg></div>
      <div class="subpanel">
        <h2 class="subhead">Save a copy of the drawing</h2>
        <div class="sublist">
          <div class="sub"><svg class="subicon"><use href="#p-dwg"/></svg><div class="subtxt"><b>Drawing</b>Save the current drawing to the<br>default drawing (DWG) file format.</div></div>
          <div class="sub"><svg class="subicon"><use href="#p-mobile"/></svg><div class="subtxt"><b>Drawing to AutoCAD Web &amp; Mobile</b>Save the current drawing to AutoCAD<br>Web &amp; Mobile.</div></div>
          <div class="sub"><svg class="subicon"><use href="#p-dwt"/></svg><div class="subtxt"><b>Drawing Template</b>Create a drawing template (DWT) file<br>in which can be used to create a new<br>drawing.</div></div>
          <div class="sub"><svg class="subicon"><use href="#p-dws"/></svg><div class="subtxt"><b>Drawing Standards</b>Create a drawing standards (DWS) file<br>which can be used to check the<br>standards of a drawing.</div></div>
          <div class="sub s-wide"><svg class="subicon"><use href="#m-saveas"/></svg><div class="subtxt"><b>Other Formats</b>Save the current drawing to a DWG,<br>DWT, DWS, or DXF file format.</div></div>
          <div class="sub s-wide off"><svg class="subicon"><use href="#p-layout"/></svg><div class="subtxt"><b>Save Layout as a Drawing</b>Save all visible objects from the<br>current layout to the model space of a<br>new drawing.</div></div>
          <div class="sub s-wide"><svg class="subicon"><use href="#p-conv"/></svg><div class="subtxt"><b>DWG Convert</b>Convert drawing format version for<br>selected drawing files.</div></div>
        </div>
        <div class="subscroll"><span class="car sc-car"></span></div>
      </div>
      <div class="menu-btns"><span class="mbtn b-opt">Options</span><span class="mbtn b-exit">Exit Autodesk AutoCAD 2020</span></div>
    </div>
  </aside>
  <div class="appbtn">
    <svg width="41" height="41" viewBox="0 0 41 41"><rect width="41" height="41" fill="#000"/><rect x="1" y="1" width="39" height="39" fill="url(#gBtn)"/><text class="ico-b" x="3" y="34" font-size="40" fill="#c4202a">A</text><path d="M31 18H39L35 22Z" fill="#d8d8d8"/></svg>
  </div>
</div>
</body>
</html>
```

FILE: styles.css
```css
* { box-sizing: border-box; }
html, body { margin: 0; padding: 0; background: #000; }
body { font-family: "Open Sans", "Liberation Sans", sans-serif; font-size: 11px; color: #dfe3e8; }
.defs { position: absolute; }
svg { display: block; flex: none; }
.i16 { width: 16px; height: 16px; flex: none; }
.w18 { width: 18px; height: 18px; }
.ico-t { font-family: "Liberation Sans", sans-serif; }
.ico-b { font-family: "Liberation Sans", sans-serif; font-weight: 700; }

.app { position: relative; width: 1920px; height: 1080px; display: flex; flex-direction: column; overflow: hidden; background: #222933; }

.car { display: inline-block; width: 0; height: 0; border-left: 4px solid transparent; border-right: 4px solid transparent; border-top: 4px solid #d0d4da; flex: none; }

/* title bar */
.titlebar { height: 24px; display: flex; align-items: center; flex: none; }
.qat { width: 696px; flex: none; display: flex; align-items: center; padding-left: 50px; gap: 8px; }
.q-car { border-left-width: 3px; border-right-width: 3px; border-top-width: 3px; margin-left: -2px; }
.title { width: 651px; flex: none; color: #eef0f2; font-size: 11.300px; display: flex; }
.title-file { margin-left: 12px; }
.tri-r { width: 0; height: 0; border-top: 4px solid transparent; border-bottom: 4px solid transparent; border-left: 4px solid #d8d8d8; margin-right: 5px; flex: none; }
.search-key { width: 178px; height: 20px; background: #424c5c; color: #a9b0bb; font-style: italic; font-size: 11px; line-height: 19px; padding-left: 3px; flex: none; }
.t-lens { margin-left: 5px; }
.t-user { margin-left: 8px; }
.signin { margin-left: 5px; width: 83px; color: #e8eaec; font-size: 12px; flex: none; }
.t-car1 { border-left-width: 3px; border-right-width: 3px; margin-left: 0; }
.t-cart { margin-left: 13px; }
.t-tri { margin-left: 9px; }
.t-car2 { border-left-width: 3px; border-right-width: 3px; margin-left: 4px; }
.t-sep { width: 1px; height: 18px; background: #4b5565; margin-left: 7px; flex: none; }
.t-help { margin-left: 10px; }
.t-car3 { border-left-width: 3px; border-right-width: 3px; margin-left: 7px; }
.winctl { margin-left: 72px; display: flex; align-items: center; gap: 13px; }

/* tabs */
.tabs { height: 21px; display: flex; align-items: center; padding-left: 411px; flex: none; color: #a9b2bf; font-size: 11.300px; }
.tab { margin-right: 20px; }
.tab-toggle { width: 14px; height: 8px; background: #e8e8e8; border-radius: 2px; margin-left: 12px; }
.tab-car { border-left-width: 3px; border-right-width: 3px; margin-left: 3px; }

/* ribbon */
.ribbon { height: 97px; display: flex; flex: none; background: #3b4453; }
.panel { height: 97px; display: flex; flex-direction: column; border-right: 1px solid #222933; flex: none; }
.tools { height: 78px; padding-top: 3px; display: flex; }
.t-right { justify-content: flex-end; padding-right: 10px; }
.plabel { height: 18px; display: flex; align-items: center; justify-content: center; gap: 6px; color: #d6dae0; position: relative; font-size: 11px; }
.has-launch { padding-right: 14px; }
.launch { position: absolute; right: 5px; top: 6px; }
.p0 { width: 476px; } .p1 { width: 189px; } .p2 { width: 162px; } .p3 { width: 68px; } .p4 { width: 265px; }
.p5 { width: 98px; } .p6 { width: 79px; } .p7 { width: 64px; } .p8 { width: 519px; border-right: 0; }
.la { width: 273px; }
.lv { justify-content: flex-start; padding: 0 0 0 5px; }

.big { display: flex; flex-direction: column; align-items: center; line-height: 15px; font-size: 11px; color: #e0e3e7; flex: none; }
.bicon { height: 39px; display: flex; align-items: flex-start; justify-content: center; padding-top: 3px; }
.c-down { border-left-width: 3px; border-right-width: 3px; margin-top: 3px; }
.big-a { font: 42px/36px "Liberation Sans", sans-serif; color: #d6d6d6; }
.bicon.ruler-box { padding-top: 16px; }
.b-text { width: 48px; } .b-dim { width: 58px; } .b-ins { width: 44px; } .b-grp { width: 40px; }
.b-match { width: 64px; } .b-meas { width: 72px; } .b-paste { width: 52px; } .b-base { width: 62px; } .b-layer { width: 62px; }
.b-base .bicon { padding-top: 8px; }

.scol { display: flex; flex-direction: column; flex: none; }
.srow { height: 24px; display: flex; align-items: center; gap: 5px; color: #e0e3e7; font-size: 11px; }
.m-car { border-left-width: 3px; border-right-width: 3px; margin-right: 8px; }
.s-anno { margin-left: 7px; } .s-grp { margin-left: 6px; } .s-block { margin-left: 1px; }
.s-util { margin-left: 1px; } .s-clip { margin-left: 4px; } .s-drop { margin-left: 2px; width: 180px; padding-top: 2px; } .s-prop { width: 16px; }
.r-car1, .r-car2, .r-car3 { border-left-width: 3px; border-right-width: 3px; }
.r-car1 { margin-left: 3px; } .r-car2 { margin-left: 2px; } .r-car3 { margin-left: 3px; }

.drop { height: 21px; margin-bottom: 3px; background: #4b5769; border: 1px solid #262d38; display: flex; align-items: center; gap: 2px; color: #e0e3e7; font-size: 11px; position: relative; padding: 0 3px; }
.drop:first-child { margin-bottom: 2px; }
.drop::after { content: ""; position: absolute; right: 1px; top: 7px; border-left: 4px solid transparent; border-right: 4px solid transparent; border-top: 4px solid #d0d4da; }
.drop.d-color { gap: 10px; padding-left: 12px; }
.swatch { width: 15px; height: 15px; background: #fff; border: 1px solid #999; flex: none; }
.ln { width: 64px; height: 1px; background: #fff; flex: none; }
.s-layer { width: 208px; padding-top: 2px; }
.drop.d-layer { gap: 3px; padding-left: 5px; margin-bottom: 1px; }
.sw-b { width: 14px; height: 14px; border-color: #000; margin-left: 3px; margin-right: 1px; }
.lrow { gap: 8px; padding-left: 4px; }
.lrow .lt { margin-left: -3px; }

.ribbon-gap { height: 27px; flex: none; background: #222933; }
.ribbon-band { height: 4px; flex: none; background: #3b4453; }

/* canvas */
.canvas { height: 811px; flex: none; position: relative; background: #000; overflow: hidden; display: flex; }
.vscroll { width: 8px; flex: none; background: linear-gradient(90deg, #8fbce0, #c4dcef 35%, #cfe3f3); }
.dr { font-family: "Liberation Sans", Arial, sans-serif; fill: #fff; white-space: pre; }
.sr { font-family: "Liberation Serif", "Times New Roman", serif; font-size: 21px; fill: #e8e8e8; }
.dim { font-weight: 400; fill: #dcdcdc; }
.thin { font-family: "Liberation Sans", sans-serif; font-size: 18px; fill: #e8e8e8; }
.vpctl { position: absolute; right: 20px; top: 13px; display: flex; align-items: center; gap: 10px; }

/* layout tabs */
.layouts { height: 22px; flex: none; display: flex; align-items: flex-start; padding-left: 10px; border-top: 1px solid #4a5361; color: #c4c9d0; font-size: 11px; }
.ltab { height: 17px; line-height: 16px; padding: 0 11px; background: #2e3643; margin-right: 2px; border-radius: 0 0 6px 6px; }
.ltab.active { background: #3b4453; color: #fff; font-weight: 700; padding: 0 13px; margin-right: 0; }
.ltab.plus { padding: 0 7px; font-size: 13px; background: #2e3643; margin-left: 4px; }

/* status bar */
.status { height: 24px; flex: none; margin-bottom: 2px; display: flex; justify-content: flex-end; gap: 3px; color: #e6e8eb; font-size: 11px; }
.sgroup { height: 24px; background: #3b4453; display: flex; align-items: center; flex: none; }
.sg-model { width: 47px; justify-content: center; }
.sg-grid { width: 63px; padding-left: 4px; gap: 9px; }
.sg-grid .car { border-left-width: 3px; border-right-width: 3px; margin-left: 3px; }
.sg-ortho { width: 100px; padding-left: 4px; }
.sm1 { margin-left: 9px; }
.sm2 { margin-left: 11px; }
.sg-ortho .car { border-left-width: 3px; border-right-width: 3px; margin-left: 4px; }
.sg-lw { width: 63px; gap: 1px; padding-left: 1px; }
.sg-lw .car { border-left-width: 3px; border-right-width: 3px; margin-left: 3px; }
.sbtn { width: 22px; height: 22px; background: #5d8ec4; display: flex; align-items: center; justify-content: center; flex: none; }
.sg-scale { width: 145px; padding-left: 1px; }
.sc2 { margin-left: 6px; } .sc3 { margin-left: 10px; }
.scale-t { margin-left: 9px; font-size: 11px; white-space: nowrap; }
.sg-scale .car { border-left-width: 3px; border-right-width: 3px; margin-left: 3px; }
.sg-gear { width: 39px; padding-left: 4px; gap: 7px; }
.sg-gear .car { border-left-width: 3px; border-right-width: 3px; }
.sg-plus { width: 23px; justify-content: center; }
.sg-objs { width: 24px; justify-content: center; }
.sg-warn { width: 22px; justify-content: center; }
.sg-full { width: 49px; padding-left: 4px; gap: 8px; }

/* taskbar */
.taskbar { height: 48px; flex: none; background: #eeeeee; border-top: 1px solid #dadada; display: flex; align-items: center; padding: 0 0 2px 21px; color: #1c1c1c; position: relative; font-family: "Noto Sans", "Open Sans", sans-serif; }
.tb-win { margin-right: 14px; }
.tb-search { width: 218px; height: 30px; background: #fff; border-radius: 15px; border: 1px solid #e3e3e3; display: flex; align-items: center; padding-left: 10px; gap: 11px; color: #5c5c5c; font-size: 13px; }
.tb-apps { display: flex; margin-left: 3px; }
.tb-app { width: 44px; height: 40px; display: flex; align-items: center; justify-content: center; position: relative; }
.tb-app.dot::after { content: ""; position: absolute; bottom: 1px; left: 20px; width: 4px; height: 3px; border-radius: 2px; background: #8a8a8a; }
.tb-app.active { width: 38px; height: 39px; margin-left: 3px; background: #f8f8f8; border-radius: 4px; }
.tb-app.active::after { content: ""; position: absolute; bottom: 1px; left: 12px; width: 14px; height: 3px; border-radius: 2px; background: #1a78d4; }
.tray { margin-left: auto; margin-top: 2px; display: flex; align-items: center; padding-right: 19px; font-size: 12px; }
.tr-lang { display: flex; flex-direction: column; align-items: center; line-height: 16px; margin-left: 21px; width: 24px; }
.tr-wifi { margin-left: 16px; }
.tr-spk { margin-left: 7px; }
.tr-bat { margin-left: 11px; }
.tr-clock { display: flex; flex-direction: column; align-items: flex-end; line-height: 16px; margin-left: 7px; width: 70px; }

/* application menu */
.appmenu { position: absolute; left: 0; top: 24px; width: 423px; height: 592px; display: flex; background: #f0f0f0; border: 1px solid #a8a8a8; color: #1e1e1e; }
.appbtn { position: absolute; left: 0; top: 0; }
.menu-left { width: 142px; background: #d6d6d6; padding-top: 43px; flex: none; border-right: 1px solid #f4f4f4; }
.recent { display: flex; height: 22px; justify-content: flex-end; margin-bottom: 9px; padding-right: 8px; }
.rbtn { width: 22px; height: 22px; border: 1px solid #a0a0a0; display: flex; align-items: center; justify-content: center; margin-left: -1px; }
.mitem { height: 46px; display: flex; align-items: center; padding-left: 16px; position: relative; }
.micon { width: 32px; height: 32px; flex: none; }
.mtxt { margin-left: 6px; font-size: 11px; line-height: 13px; }
.marr { position: absolute; left: 122px; top: 19px; width: 0; height: 0; border-top: 4px solid transparent; border-bottom: 4px solid transparent; border-left: 4px solid #555; }
.mitem.sel { margin-left: 1px; margin-right: -1px; padding-left: 15px; background: linear-gradient(#cfe4f8, #b4d5f2); border: 1px solid #1a6bb0; border-right: 0; }
.sel .msplit { position: absolute; left: 114px; top: 1px; width: 1px; height: 42px; background: #1a6bb0; }
.sel .marr { left: 120px; top: 17px; }
.msep { height: 3px; margin-left: 12px; border-top: 1px solid #b8b8b8; margin-top: 0; }

.menu-right { width: 279px; flex: none; display: flex; flex-direction: column; }
.cmdsearch { margin: 8px 0 0 2px; width: 272px; height: 20px; background: #fff; border: 1px solid #a8a8a8; display: flex; align-items: center; justify-content: space-between; padding: 0 2px 0 3px; color: #6a6a6a; font-style: italic; font-size: 11px; }
.subpanel { margin: 15px 0 0 -4px; width: 273px; height: 496px; background: #fff; border: 1px solid #1a6bb0; box-shadow: 0 0 0 1px #fff; display: flex; flex-direction: column; position: relative; z-index: 1; }
.subhead { margin: 0 10px; height: 33px; line-height: 34px; font-size: 10.600px; font-weight: 700; color: #111; border-bottom: 1px solid #d4d4d4; flex: none; }
.sublist { height: 450px; overflow: hidden; padding-top: 15px; flex: none; }
.sub { display: flex; align-items: center; padding-left: 20px; margin-bottom: 22px; }
.subicon { width: 32px; height: 32px; flex: none; }
.sub.s-wide { padding-left: 16px; }
.sub.s-wide .subtxt { margin-left: 10px; }
.subtxt { margin-left: 6px; font-size: 11.100px; line-height: 13px; color: #2a2a2a; white-space: nowrap; }
.subtxt b { display: block; font-weight: 700; font-size: 10.700px; }
.sub.off .subtxt { color: #8e8e8e; }
.subscroll { height: 9px; margin: 2px 1px 0; background: #d4d4d4; border: 1px solid #9a9a9a; display: flex; justify-content: center; align-items: center; flex: none; }
.sc-car { border-top-color: #444; }
.menu-btns { display: flex; margin-top: 16px; padding-left: 34px; gap: 21px; }
.mbtn { height: 23px; border: 1px solid #8a8a8a; background: #f4f4f4; line-height: 21px; font-size: 10.800px; white-space: nowrap; text-align: center; flex: none; }
.b-opt { width: 52px; }
.b-exit { width: 157px; }
```
